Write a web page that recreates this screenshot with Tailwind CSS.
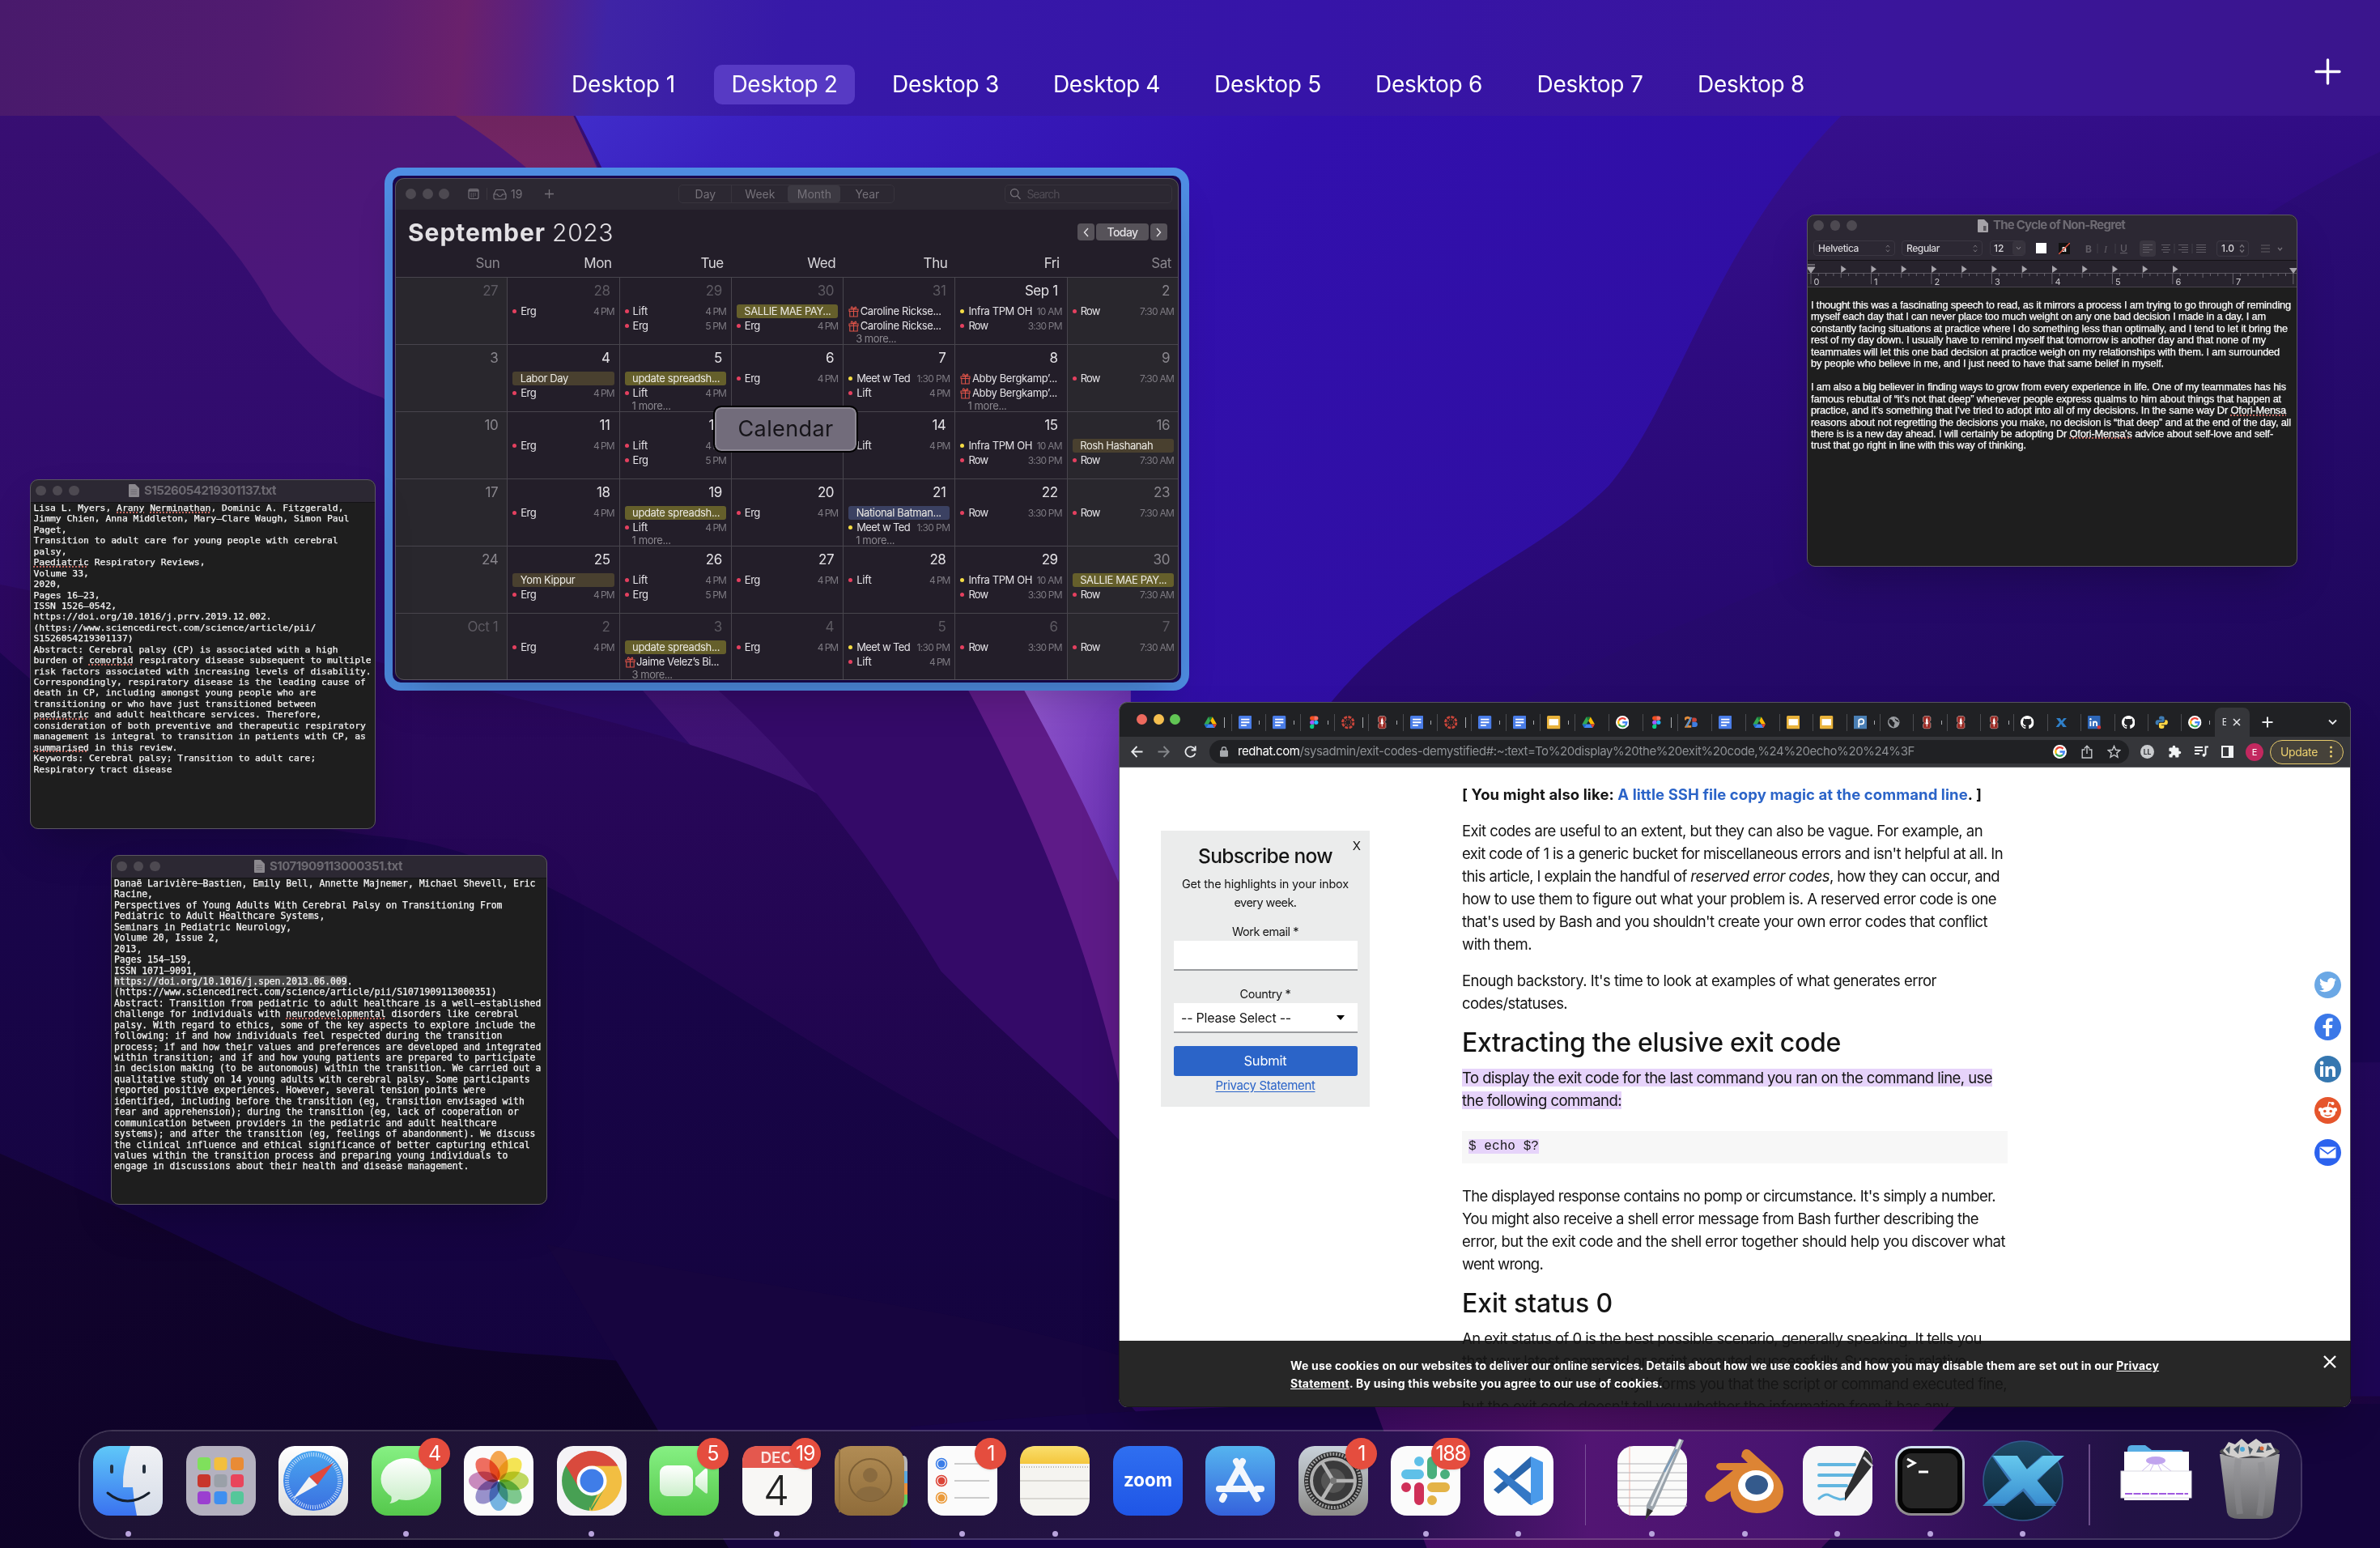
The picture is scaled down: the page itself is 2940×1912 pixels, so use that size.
<!DOCTYPE html>
<html lang="en">
<head>
<meta charset="utf-8">
<title>Mission Control</title>
<script src="https://cdn.jsdelivr.net/npm/@tailwindcss/browser@4"></script>
</head>
<body class="relative w-[2940px] h-[1912px] overflow-hidden bg-[#1d0758] font-['Inter',sans-serif] text-white">

<!-- Wallpaper -->
<svg class="absolute inset-0 w-full h-full" viewBox="0 0 1568 1020" preserveAspectRatio="none">
  <defs>
    <linearGradient id="wBase" x1="0" y1="0" x2="0.15" y2="1"><stop offset="0" stop-color="#3a0f74"/><stop offset=".35" stop-color="#2f0b6c"/><stop offset="1" stop-color="#1d0653"/></linearGradient>
    <linearGradient id="wPurple" x1="0" y1="0" x2=".8" y2="1"><stop offset="0" stop-color="#4b176f"/><stop offset=".35" stop-color="#4c177c"/><stop offset="1" stop-color="#38106f"/></linearGradient>
    <linearGradient id="wMag" x1="0" y1="0" x2="0" y2="1"><stop offset="0" stop-color="#64204f"/><stop offset="1" stop-color="#78276c"/></linearGradient>
    <linearGradient id="wBlue" x1="0" y1=".1" x2="1" y2=".6"><stop offset="0" stop-color="#4334cf"/><stop offset=".12" stop-color="#3a20c0"/><stop offset=".35" stop-color="#3210ae"/><stop offset=".7" stop-color="#2f0ea0"/><stop offset="1" stop-color="#2c0a80"/></linearGradient>
    <linearGradient id="wRight" x1="0" y1="0" x2=".3" y2="1"><stop offset="0" stop-color="#3d1498"/><stop offset=".4" stop-color="#2e0b80"/><stop offset="1" stop-color="#1e065c"/></linearGradient>
    <linearGradient id="wRight2" x1="0" y1="0" x2=".4" y2="1"><stop offset="0" stop-color="#340f8a"/><stop offset="1" stop-color="#1a0552"/></linearGradient>
    <linearGradient id="wStreak" x1="0" y1="0" x2="1" y2=".5"><stop offset="0" stop-color="#9158cc"/><stop offset="1" stop-color="#6a30b4"/></linearGradient>
    <linearGradient id="wLow" x1="0" y1="0" x2="0" y2="1"><stop offset="0" stop-color="#2c0860"/><stop offset="1" stop-color="#14033c"/></linearGradient>
    <linearGradient id="wLow2" x1="0" y1="0" x2="0" y2="1"><stop offset="0" stop-color="#1c0650"/><stop offset="1" stop-color="#12033a"/></linearGradient>
    <linearGradient id="wDark" x1="0" y1="0" x2="1" y2="1"><stop offset="0" stop-color="#12032f"/><stop offset="1" stop-color="#0a0220"/></linearGradient>
    <linearGradient id="wFoot" x1="0" y1="0" x2="1" y2="0"><stop offset="0" stop-color="#2a0660"/><stop offset=".35" stop-color="#4d0f66"/><stop offset=".7" stop-color="#3c0a58"/><stop offset="1" stop-color="#1a0440"/></linearGradient>
  </defs>
  <rect width="1568" height="1020" fill="url(#wBase)"/>
  <path d="M330 0H1568V620H760C680 470 560 420 480 300C430 220 420 120 330 0Z" fill="url(#wBlue)"/>
  <path d="M0 0H340C360 40 370 56 378 77C386 95 392 105 398 120C440 260 620 440 740 620L520 560C400 440 330 330 252 262C215 250 196 225 180 205C150 150 110 120 66 77L0 20Z" fill="url(#wPurple)"/>
  <path d="M220 0H340C360 40 370 56 378 77C386 95 392 105 400 130L380 140C350 112 330 96 301 77C270 50 240 20 220 0Z" fill="url(#wMag)"/>
  <path d="M1568 40L1230 60C1130 150 1110 260 1060 320C1000 380 900 400 840 520L900 640H1568Z" fill="url(#wRight)"/>
  <path d="M1568 100C1400 180 1280 330 1180 380C1100 420 1010 440 960 500V700H1568Z" fill="url(#wRight2)"/>
  <path d="M0 385C120 410 200 420 280 445C420 480 520 500 600 560C700 620 740 660 800 700V1020H0Z" fill="url(#wLow)"/>
  <path d="M248 340C380 370 500 440 620 640C680 700 720 730 745 760V455H640L520 400Z" fill="#340a68"/>
  <path d="M638 455H680L745 585V760C735 680 700 570 638 455Z" fill="#5e1b88"/>
  <path d="M672 450H745V600C720 540 700 500 672 450Z" fill="url(#wStreak)"/>
  <path d="M0 430C100 520 180 545 260 552C400 570 540 720 760 800V1020H0Z" fill="url(#wLow2)"/>
  <path d="M0 760C90 800 150 830 230 870C320 905 400 880 520 920L620 1020H0Z" fill="url(#wDark)"/>
  <path d="M360 820C500 850 640 860 760 900V1020H480Z" fill="#17053f"/>
  <path d="M740 920H1568V1020H820Z" fill="url(#wFoot)"/>
  <path d="M1290 925H1568V1020H1200Z" fill="#14043c"/>
  <path d="M600 940C720 930 840 925 905 925L940 1020H600Z" fill="#170446"/>
</svg>

<!-- Spaces bar -->
<header class="absolute inset-x-0 top-0 h-[143px] flex items-start pt-[80px] overflow-hidden bg-[linear-gradient(97deg,#491a6c_0%,#511b70_11%,#5c1e70_16%,#6a216c_19.5%,#5a2080_22%,#3f24a6_25.500%,#3719a8_33%,#3614a8_55%,#3a159c_78%,#3a158c_100%)]">
  <nav class="relative flex gap-[25px] ml-[683px] text-[28px] leading-[49px]">
    <div class="w-[174px] text-center"><span data-w="128">Desktop 1</span></div>
    <div class="w-[174px] text-center rounded-[10px] bg-[#573ac4]"><span data-w="131">Desktop 2</span></div>
    <div class="w-[174px] text-center"><span data-w="132">Desktop 3</span></div>
    <div class="w-[174px] text-center"><span data-w="132">Desktop 4</span></div>
    <div class="w-[174px] text-center"><span data-w="132">Desktop 5</span></div>
    <div class="w-[174px] text-center"><span data-w="132">Desktop 6</span></div>
    <div class="w-[174px] text-center"><span data-w="131">Desktop 7</span></div>
    <div class="w-[174px] text-center"><span data-w="132">Desktop 8</span></div>
  </nav>
  <svg class="absolute left-[2859px] top-[72px] w-[33px] h-[33px]" viewBox="0 0 33 33" stroke="#fff" stroke-width="3.4" stroke-linecap="round"><path d="M16.5 2V31M2 16.5H31"/></svg>
</header>

<!-- Calendar window -->
<div class="absolute left-[475px] top-[207px] w-[994px] h-[646px] rounded-[20px] border-[10px] border-[#4f8ee4] bg-[#1b0750]"></div>
<section class="absolute left-[488px] top-[220px] w-[968px] h-[620px] rounded-[11px] overflow-hidden bg-[#231e29] outline -outline-offset-1 outline-[#57535c] shadow-2xl flex flex-col">
  <div class="h-[39px] shrink-0 bg-[#2c2832] flex items-center text-[14px] text-[#757179]">
    <div class="flex gap-[7.5px] ml-[13px] w-[84px]">
      <i class="size-[13px] rounded-full bg-[#4d4951]"></i><i class="size-[13px] rounded-full bg-[#4d4951]"></i><i class="size-[13px] rounded-full bg-[#4d4951]"></i>
    </div>
    <svg class="w-[14px] h-[15px] -ml-[7px]" viewBox="0 0 14 15" fill="none" stroke="#757179" stroke-width="1.2"><rect x="1" y="1.5" width="12" height="12" rx="2"/><path d="M1 3.6H13" stroke-width="2"/><path d="M3.5 7H10.5M3.5 9H10.5M3.5 11H8" stroke-dasharray="1.3 1.2"/></svg>
    <i class="w-px h-[15px] bg-[#3b3740] ml-[9px]"></i>
    <svg class="w-[17px] h-[14px] ml-[7px]" viewBox="0 0 17 14" fill="none" stroke="#757179" stroke-width="1.2"><path d="M1 7L4 1.500H13L16 7V11Q16 13 14 13H3Q1 13 1 11ZM1 7H5.500Q6 9.500 8.500 9.500T11.500 7H16"/></svg>
    <span class="ml-[5px]">19</span>
    <svg class="w-[13px] h-[13px] ml-[27px]" viewBox="0 0 13 13" stroke="#757179" stroke-width="1.300"><path d="M6.500 1V12M1 6.500H12"/></svg>
    <div class="ml-[153px] flex h-[23px] w-[267px] rounded-[5px] border border-[#38343d] leading-[21px] text-center">
      <span class="w-[65px] border-r border-[#38343d]">Day</span><span class="w-[69px]">Week</span><span class="w-[65px] bg-[#3c3942] rounded">Month</span><span class="w-[66px]">Year</span>
    </div>
    <div class="ml-[136px] flex items-center h-[23px] w-[207px] rounded-[5px] border border-[#38343d] text-[#504c55] pl-[5px] gap-[6px]">
      <svg class="size-[15px]" viewBox="0 0 15 15" fill="none" stroke="#757179" stroke-width="1.300"><circle cx="6.200" cy="6.200" r="4.700"/><path d="M9.600 9.800L13.500 14"/></svg><span data-w="40">Search</span>
    </div>
  </div>
  <div class="h-[56px] shrink-0 flex items-center pl-[16px] pr-[14px] text-[#e3e1e5]">
    <h1 class="text-[30px] font-bold"><span data-w="170">September</span> <span class="font-light ml-[1px]" data-w="76">2023</span></h1>
    <div class="ml-auto flex gap-[2px] text-[14px] h-[21px] leading-[21px] font-medium text-center -mt-[1px]">
      <span class="w-[21px] bg-[#565259] rounded-[4px] flex items-center justify-center"><svg class="w-[7px] h-[12px]" viewBox="0 0 7 12" fill="none" stroke="#e3e1e5" stroke-width="1.400"><path d="M6 1L1.500 6L6 11"/></svg></span>
      <span class="w-[65px] bg-[#565259] rounded-[4px]"><span data-w="38">Today</span></span>
      <span class="w-[21px] bg-[#565259] rounded-[4px] flex items-center justify-center"><svg class="w-[7px] h-[12px]" viewBox="0 0 7 12" fill="none" stroke="#e3e1e5" stroke-width="1.400"><path d="M1 1L5.500 6L1 11"/></svg></span>
    </div>
  </div>
  <div class="h-[27px] shrink-0 grid grid-cols-7 text-right text-[17px] leading-[21px] text-[#d8d6da] tracking-tight *:pr-[9px]">
    <span class="text-[#89868d]">Sun</span><span>Mon</span><span>Tue</span><span>Wed</span><span>Thu</span><span>Fri</span><span class="text-[#89868d]">Sat</span>
  </div>
  <div id="month" class="grow grid grid-cols-7 auto-rows-[83px]"></div>
</section>
<div class="absolute left-[883px] top-[503px] w-[175px] h-[54px] rounded-[8px] border-2 border-[#8d8894] outline-[2px] outline-black bg-[#726c7b] text-[#161419] text-[27px] leading-[50px] text-center"><span data-w="118">Calendar</span></div>

<!-- Text file 1 -->
<section class="absolute left-[37px] top-[592px] w-[427px] h-[432px] rounded-[10px] overflow-hidden bg-[#1e1e1e] outline -outline-offset-1 outline-[#5b5761] shadow-2xl">
  <div class="h-[29px] bg-[#2c2833] border-b border-[#141216] flex items-center">
    <div class="flex gap-[8px] ml-[7px] w-[115px]"><i class="size-[12.500px] rounded-full bg-[#4d4951]"></i><i class="size-[12.500px] rounded-full bg-[#4d4951]"></i><i class="size-[12.500px] rounded-full bg-[#4d4951]"></i></div>
    <svg class="w-[13px] h-[16px]" viewBox="0 0 13 16"><path d="M0 1Q0 0 1 0H8L13 5V15Q13 16 12 16H1Q0 16 0 15Z" fill="#8b888e"/><path d="M2.500 7H10M2.500 9.500H10M2.500 12H10" stroke="#6e6b72"/></svg>
    <span class="ml-[6px] text-[15px] font-bold text-[#6d6a72]" data-w="163">S1526054219301137.txt</span>
  </div>
  <pre class="pl-[4.500px] font-['DejaVu_Sans_Mono',monospace] text-[11.360px] leading-[13.440px] text-[#f4f4f4] [-webkit-text-stroke:0.25px_#f4f4f4]">Lisa L. Myers, <u class="underline decoration-dotted decoration-2 decoration-[#c4665f] underline-offset-[1px]">Arany</u> <u class="underline decoration-dotted decoration-2 decoration-[#c4665f] underline-offset-[1px]">Nerminathan</u>, Dominic A. Fitzgerald,
Jimmy Chien, Anna Middleton, Mary–Clare Waugh, Simon Paul
Paget,
Transition to adult care for young people with cerebral
palsy,
<u class="underline decoration-dotted decoration-2 decoration-[#c4665f] underline-offset-[1px]">Paediatric</u> Respiratory Reviews,
Volume 33,
2020,
Pages 16–23,
ISSN 1526–0542,
https://doi.org/10.1016/j.prrv.2019.12.002.
(https://www.sciencedirect.com/science/article/pii/
S1526054219301137)
Abstract: Cerebral palsy (CP) is associated with a high
burden of <u class="underline decoration-dotted decoration-2 decoration-[#c4665f] underline-offset-[1px]">comorbid</u> respiratory disease subsequent to multiple
risk factors associated with increasing levels of disability.
Correspondingly, respiratory disease is the leading cause of
death in CP, including amongst young people who are
transitioning or who have just transitioned between
<u class="underline decoration-dotted decoration-2 decoration-[#c4665f] underline-offset-[1px]">paediatric</u> and adult healthcare services. Therefore,
consideration of both preventive and therapeutic respiratory
management is integral to transition in patients with CP, as
<u class="underline decoration-dotted decoration-2 decoration-[#c4665f] underline-offset-[1px]">summarised</u> in this review.
Keywords: Cerebral palsy; Transition to adult care;
Respiratory tract disease</pre>
</section>

<!-- Text file 2 -->
<section class="absolute left-[137px] top-[1056px] w-[539px] h-[432px] rounded-[10px] overflow-hidden bg-[#1e1e1e] outline -outline-offset-1 outline-[#5b5761] shadow-2xl">
  <div class="h-[29px] bg-[#2c2833] border-b border-[#141216] flex items-center">
    <div class="flex gap-[8px] ml-[7px] w-[170px]"><i class="size-[12.500px] rounded-full bg-[#4d4951]"></i><i class="size-[12.500px] rounded-full bg-[#4d4951]"></i><i class="size-[12.500px] rounded-full bg-[#4d4951]"></i></div>
    <svg class="w-[13px] h-[16px]" viewBox="0 0 13 16"><path d="M0 1Q0 0 1 0H8L13 5V15Q13 16 12 16H1Q0 16 0 15Z" fill="#8b888e"/><path d="M2.500 7H10M2.500 9.500H10M2.500 12H10" stroke="#6e6b72"/></svg>
    <span class="ml-[6px] text-[15px] font-bold text-[#6d6a72]" data-w="164">S1071909113000351.txt</span>
  </div>
  <pre class="pl-[4px] font-['DejaVu_Sans_Mono',monospace] text-[11.380px] leading-[13.440px] text-[#f4f4f4] [-webkit-text-stroke:0.25px_#f4f4f4]">Danaë Larivière–Bastien, Emily Bell, Annette Majnemer, Michael Shevell, Eric
Racine,
Perspectives of Young Adults With Cerebral Palsy on Transitioning From
Pediatric to Adult Healthcare Systems,
Seminars in Pediatric Neurology,
Volume 20, Issue 2,
2013,
Pages 154–159,
ISSN 1071–9091,
<span class="bg-[#464646]">https://doi.org/10.1016/j.spen.2013.06.009</span>.
(https://www.sciencedirect.com/science/article/pii/S1071909113000351)
Abstract: Transition from pediatric to adult healthcare is a well–established
challenge for individuals with <u class="underline decoration-dotted decoration-2 decoration-[#c4665f] underline-offset-[1px]">neurodevelopmental</u> disorders like cerebral
palsy. With regard to ethics, some of the key aspects to explore include the
following: if and how individuals feel respected during the transition
process; if and how their values and preferences are developed and integrated
within transition; and if and how young patients are prepared to participate
in decision making (to be autonomous) within the transition. We carried out a
qualitative study on 14 young adults with cerebral palsy. Some participants
reported positive experiences. However, several tension points were
identified, including before the transition (eg, transition envisaged with
fear and apprehension); during the transition (eg, lack of cooperation or
communication between providers in the pediatric and adult healthcare
systems); and after the transition (eg, feelings of abandonment). We discuss
the clinical influence and ethical significance of better capturing ethical
values within the transition process and preparing young individuals to
engage in discussions about their health and disease management.</pre>
</section>

<!-- Rich text document -->
<section class="absolute left-[2232px] top-[265px] w-[606px] h-[435px] rounded-[10px] overflow-hidden bg-[#1e1e1e] outline -outline-offset-1 outline-[#5b5761] shadow-2xl flex flex-col">
  <div class="h-[27px] shrink-0 bg-[#2c2833] flex items-center">
    <div class="flex gap-[8px] ml-[8px] w-[203px]"><i class="size-[12.500px] rounded-full bg-[#4d4951]"></i><i class="size-[12.500px] rounded-full bg-[#4d4951]"></i><i class="size-[12.500px] rounded-full bg-[#4d4951]"></i></div>
    <svg class="w-[13px] h-[16px]" viewBox="0 0 13 16"><path d="M0 1Q0 0 1 0H8L13 5V15Q13 16 12 16H1Q0 16 0 15Z" fill="#a5a2a8"/><path d="M7 8H10.500V14H7ZM2.500 7H5" fill="#57545b"/></svg>
    <span class="ml-[6px] text-[15px] font-bold text-[#6d6a72]" data-w="163">The Cycle of Non-Regret</span>
  </div>
  <div class="h-[30px] shrink-0 bg-[#2c2833] border-b border-[#141216] flex items-center pl-[8px] text-[12px] text-[#d9d7db] font-medium">
    <div class="w-[101px] h-[19px] rounded-[4px] border border-[#3b3742] px-[5px] flex items-center justify-between"><span data-w="50">Helvetica</span><svg class="w-[6px] h-[10px]" viewBox="0 0 6 10" fill="none" stroke="#77737b"><path d="M1 3.500L3 1L5 3.500M1 6.500L3 9L5 6.500"/></svg></div>
    <div class="ml-[8px] w-[100px] h-[19px] rounded-[4px] border border-[#3b3742] px-[5px] flex items-center justify-between"><span data-w="41">Regular</span><svg class="w-[6px] h-[10px]" viewBox="0 0 6 10" fill="none" stroke="#77737b"><path d="M1 3.500L3 1L5 3.500M1 6.500L3 9L5 6.500"/></svg></div>
    <div class="ml-[9px] w-[44px] h-[19px] rounded-[4px] border border-[#3b3742] pl-[4px] flex items-center justify-between"><span>12</span><span class="bg-[#37333d] rounded-[3px] h-full w-[15px] flex items-center justify-center"><svg class="w-[7px] h-[5px]" viewBox="0 0 7 5" fill="none" stroke="#8a868e"><path d="M1 1L3.500 4L6 1"/></svg></span></div>
    <i class="ml-[13px] size-[13px] bg-white"></i>
    <svg class="ml-[15px] size-[14px]" viewBox="0 0 14 14"><rect width="14" height="14" fill="#111"/><text x="3.500" y="11" font-size="11" font-weight="700" fill="#fff" font-family="Inter">a</text><path d="M0 14L14 0" stroke="#e0553f" stroke-width="1.500"/></svg>
    <svg class="ml-[13px] w-[230px] h-[20px]" viewBox="0 0 230 20" fill="none" stroke="#605c65" stroke-width="1.200">
      <text x="6" y="14.500" font-size="12" font-weight="700" fill="#605c65" stroke="none" font-family="Inter">B</text>
      <text x="29" y="14.500" font-size="12" font-style="italic" fill="#605c65" stroke="none" font-family="Liberation Serif">I</text>
      <text x="49" y="14" font-size="12" fill="#605c65" stroke="none" font-family="Inter" text-decoration="underline">U</text>
      <path d="M21 4V16M43 4V16M116 4V16M138 4V16" stroke="#3f3b45"/>
      <rect x="73" y="0" width="20" height="20" rx="4" fill="#3a3640" stroke="none"/>
      <path d="M77 5.500H89M77 8.500H85M77 11.500H89M77 14.500H85M100 5.500H111M102 8.500H109M100 11.500H111M102 14.500H109M121 5.500H133M125 8.500H133M121 11.500H133M125 14.500H133M143 5.500H155M143 8.500H155M143 11.500H155M143 14.500H155"/>
      <rect x="168.500" y=".6" width="39" height="18.800" rx="4" stroke="#3b3742"/>
      <text x="174" y="14.300" font-size="12" font-weight="500" fill="#d9d7db" stroke="none" font-family="Inter">1.0</text>
      <path d="M197 8.500L199.500 5.500L202 8.500M197 11.500L199.500 14.500L202 11.500" stroke="#77737b"/>
      <path d="M223 6H230M223 10H230M223 14H230"/>
    </svg>
    <svg class="w-[32px] h-[20px]" viewBox="0 0 32 20" fill="none" stroke="#605c65" stroke-width="1.200"><path d="M0 6H4M0 10H4M0 14H4"/><path d="M14 9L16.500 12L19 9" stroke="#77737b"/></svg>
  </div>
  <svg class="w-[606px] h-[33px] shrink-0 bg-[#27232d]" viewBox="0 0 606 33"><g id="ruler"></g></svg>
  <div class="pt-[15px] pl-[5px] font-['Liberation_Sans',sans-serif] text-[12.800px] leading-[14.460px] text-[#fafafa] [-webkit-text-stroke:0.25px_#fafafa] *:block">
    <div><span data-w="593">I thought this was a fascinating speech to read, as it mirrors a process I am trying to go through of reminding</span></div>
    <div><span data-w="562">myself each day that I can never place too much weight on any one bad decision I made in a day. I am</span></div>
    <div><span data-w="589">constantly facing situations at practice where I do something less than optimally, and I tend to let it bring the</span></div>
    <div><span data-w="562">rest of my day down. I usually have to remind myself that tomorrow is another day and that none of my</span></div>
    <div><span data-w="579">teammates will let this one bad decision at practice weigh on my relationships with them. I am surrounded</span></div>
    <div><span data-w="436">by people who believe in me, and I just need to have that same belief in myself.</span></div>
    <div>&nbsp;</div>
    <div><span data-w="587">I am also a big believer in finding ways to grow from every experience in life. One of my teammates has his</span></div>
    <div><span data-w="581">famous rebuttal of “it’s not that deep” whenever people express qualms to him about things that happen at</span></div>
    <div><span data-w="587">practice, and it’s something that I’ve tried to adopt into all of my decisions. In the same way Dr <u class="underline decoration-dotted decoration-2 decoration-[#c4665f] underline-offset-[1px]">Ofori-Mensa</u></span></div>
    <div><span data-w="593">reasons about not regretting the decisions you make, no decision is “that deep” and at the end of the day, all</span></div>
    <div><span data-w="571">there is is a new day ahead. I will certainly be adopting Dr <u class="underline decoration-dotted decoration-2 decoration-[#c4665f] underline-offset-[1px]">Ofori-Mensa’s</u> advice about self-love and self-</span></div>
    <div><span data-w="266">trust that go right in line with this way of thinking.</span></div>
  </div>
</section>

<!-- Favicon symbols -->
<svg class="hidden">
  <symbol id="drive" viewBox="0 0 16 16"><path d="M5.500 1.500H10.500L8 6Z" fill="#188038"/><path d="M5.500 1.500L8 6L3 14.500L.5 10.300Z" fill="#34a853"/><path d="M10.500 1.500L15.500 10.300H10.500L8 6Z" fill="#fbbc04"/><path d="M.5 10.300H5.400L3 14.500Z" fill="#1967d2"/><path d="M5.400 10.300H10.600L13 14.500H3Z" fill="#4285f4"/><path d="M10.600 10.300H15.500L13 14.500Z" fill="#ea4335"/></symbol>
  <symbol id="docs" viewBox="0 0 16 16"><rect width="16" height="16" rx="1.500" fill="#4a7de8"/><path d="M3 4.500H13M3 8H13M3 11.500H9.500" stroke="#fff" stroke-width="1.800"/></symbol>
  <symbol id="slides" viewBox="0 0 16 16"><rect width="16" height="16" rx="1.500" fill="#e8b23a"/><rect x="2.500" y="4" width="11" height="7.500" fill="#fff"/></symbol>
  <symbol id="figma" viewBox="0 0 16 16"><path d="M8 .5H5.500a2.500 2.500 0 0 0 0 5H8Z" fill="#f24e1e"/><path d="M8 .5h2.500a2.500 2.500 0 0 1 0 5H8Z" fill="#ff7262"/><path d="M8 5.500H5.500a2.500 2.500 0 0 0 0 5H8Z" fill="#a259ff"/><circle cx="10.500" cy="8" r="2.500" fill="#1abcfe"/><path d="M8 10.500H5.500a2.500 2.500 0 1 0 2.500 2.500Z" fill="#0acf83"/></symbol>
  <symbol id="canvas" viewBox="0 0 16 16"><circle cx="8" cy="8" r="6.500" fill="none" stroke="#c9453a" stroke-width="2.800" stroke-dasharray="3.700 1.400"/><circle cx="8" cy="8" r="3.400" fill="none" stroke="#c9453a" stroke-width="1.200" stroke-dasharray="1.200 1.470"/></symbol>
  <symbol id="stan" viewBox="0 0 16 16"><path d="M5 .5H11L12.500 2V5.500L11 7.500L12.500 9V14L11 15.500H5L3.500 14V10.500L5 8.500L3.500 7V2Z" fill="#9c2a24" stroke="#e8dcd8" stroke-width=".5"/><path d="M8 2L9.500 6L9 6.500L10 10H8.500V13H7.500V10H6L7 6.500L6.500 6Z" fill="#fff"/></symbol>
  <symbol id="goog" viewBox="0 0 16 16"><circle cx="8" cy="8" r="8" fill="#fff"/><g fill="none" stroke-width="2.200"><path d="M11.800 4.600A5 5 0 0 0 3.600 5.700" stroke="#ea4335"/><path d="M3.600 5.700A5 5 0 0 0 3.600 10.300" stroke="#fbbc05"/><path d="M3.600 10.300A5 5 0 0 0 11.300 11.700" stroke="#34a853"/><path d="M11.300 11.700A5 5 0 0 0 13 8H8" stroke="#4285f4"/></g></symbol>
  <symbol id="twob" viewBox="0 0 16 16"><path d="M0 5Q2 1 5 2.500Q8 4 5 8L2 13H8" fill="none" stroke="#e08a3a" stroke-width="2.800"/><path d="M8 2L2 13" stroke="#4a90d9" stroke-width="2"/><path d="M9 2.500H12a2.500 2.500 0 0 1 0 5H9Z" fill="#c8453a"/><path d="M9 7.500H12.500a3 3 0 0 1 0 6H9Z" fill="#3f7de0"/></symbol>
  <symbol id="pan" viewBox="0 0 16 16"><rect width="16" height="16" fill="#4a7fb5"/><path d="M6 14V4.500M6 7a3 3 0 1 1 3 3H6" fill="none" stroke="#fff" stroke-width="1.600"/></symbol>
  <symbol id="globe" viewBox="0 0 16 16"><circle cx="8" cy="8" r="7" fill="#9a9da1"/><path d="M3 4Q7 4 7 7Q10 8 9 10Q8 12 8 14Q4 12 2 8ZM9 2Q10 5 13 5L14.500 8Q12 7 10 5.500Z" fill="#202124"/></symbol>
  <symbol id="gh" viewBox="0 0 16 16"><path fill="#fff" d="M8 0C3.580 0 0 3.580 0 8c0 3.540 2.290 6.530 5.470 7.590.4.070.55-.17.55-.38 0-.19-.01-.82-.01-1.490-2.010.37-2.530-.49-2.690-.94-.09-.23-.48-.94-.82-1.130-.28-.15-.68-.52-.01-.53.63-.01 1.080.58 1.230.82.72 1.210 1.870.87 2.330.66.07-.52.28-.87.51-1.070-1.780-.2-3.640-.89-3.640-3.950 0-.87.31-1.590.82-2.150-.08-.2-.36-1.020.08-2.120 0 0 .67-.21 2.200.82.64-.18 1.320-.27 2-.27s1.360.09 2 .27c1.530-1.040 2.200-.82 2.200-.82.44 1.100.16 1.920.08 2.120.51.56.82 1.270.82 2.150 0 3.070-1.870 3.750-3.650 3.950.29.25.54.73.54 1.480 0 1.070-.01 1.930-.01 2.200 0 .21.15.46.55.38A8.010 8.010 0 0 0 16 8c0-4.420-3.580-8-8-8z"/></symbol>
  <symbol id="xx" viewBox="0 0 16 16"><path d="M2 3H6.500L8.500 6L11 3H14.500L10 8L14.500 13.500H10L7.800 10L5 13.500H1.500L6 8Z" fill="#2f7fc8"/></symbol>
  <symbol id="li" viewBox="0 0 16 16"><rect width="15" height="16" rx="1" fill="#2d66b8"/><path d="M3.300 6.500V12.500M6.700 12.500V6.500M6.700 9.500Q6.700 7.300 8.800 7.300T10.800 9.500V12.500" fill="none" stroke="#fff" stroke-width="1.800"/><circle cx="3.300" cy="4" r="1.200" fill="#fff"/><circle cx="13.500" cy="14" r="2.300" fill="#d93636"/></symbol>
  <symbol id="py" viewBox="0 0 16 16"><path d="M8 .5C5 .5 5 1.800 5 2.800V4.300H8.200V5H3.200C1.500 5 .6 6.300 .6 8.300S1.500 11 3 11H4.200V9.500C4.200 8 5.200 7.500 6.500 7.500H9.500C10.700 7.500 11.200 6.700 11.200 5.800V2.800C11.200 1.300 10.200 .5 8 .5Z" fill="#3f7cb4"/><path d="M8 15.500C11 15.500 11 14.200 11 13.200V11.700H7.800V11H12.800C14.500 11 15.400 9.700 15.400 7.700S14.500 5 13 5H12V6.500C12 8 11 8.500 9.700 8.500H6.500C5.300 8.500 4.800 9.300 4.800 10.200V13.200C4.800 14.700 5.800 15.500 8 15.500Z" fill="#ffd645"/></symbol>
</svg>

<!-- Browser window -->
<section class="absolute left-[1382px] top-[867px] w-[1522px] h-[871px] rounded-[11px] overflow-hidden bg-white outline -outline-offset-1 outline-[#55525c] shadow-2xl flex flex-col">
  <div class="h-[43px] shrink-0 bg-[#202124] flex">
    <div class="flex gap-[7.500px] items-center w-[96.600px] pl-[22px]"><i class="size-[13px] rounded-full bg-[#ed6a5e] shrink-0"></i><i class="size-[13px] rounded-full bg-[#f5bf4f] shrink-0"></i><i class="size-[13px] rounded-full bg-[#61c554] shrink-0"></i></div>
    <div id="tabs" class="flex h-[21px] mt-[15px]"></div>
    <div class="w-[43px] h-[36px] mt-[7px] bg-[#35363a] rounded-t-[8px] flex items-center gap-[8px] pl-[9px] text-[12px] text-[#dfe1e5]"><span class="w-[5px] overflow-hidden">E</span><svg class="size-[10px]" viewBox="0 0 10 10" stroke="#e8eaed" stroke-width="1.500"><path d="M1 1L9 9M9 1L1 9"/></svg></div>
    <svg class="size-[14px] ml-[15px] mt-[18px]" viewBox="0 0 14 14" stroke="#e8eaed" stroke-width="2"><path d="M7 .5V13.500M.5 7H13.500"/></svg>
    <svg class="w-[11px] h-[8px] ml-[68px] mt-[21px]" viewBox="0 0 11 8" fill="none" stroke="#e8eaed" stroke-width="1.800"><path d="M1 1.500L5.500 6L10 1.500"/></svg>
  </div>
  <div class="h-[38px] shrink-0 bg-[#35363a] border-b border-[#5a5b5f] flex items-center">
    <svg class="size-[15px] ml-[15px]" viewBox="0 0 15 15" fill="none" stroke="#e8eaed" stroke-width="1.800"><path d="M14.500 7.500H1.500M7.500 1L1.200 7.500L7.500 14"/></svg>
    <svg class="size-[15px] ml-[18px]" viewBox="0 0 15 15" fill="none" stroke="#85878b" stroke-width="1.800"><path d="M.5 7.500H13.500M7.500 1L13.800 7.500L7.500 14"/></svg>
    <svg class="size-[15px] ml-[18px]" viewBox="0 0 15 15" fill="none" stroke="#e8eaed" stroke-width="1.800"><path d="M13 4.500A6.200 6.200 0 1 0 13.500 9.500M13.700 .5V5.500H8.700"/></svg>
    <div class="ml-[16px] w-[1136px] h-[29px] rounded-full bg-[#202124] flex items-center pl-[13px] text-[15px] text-[#8e9195]">
      <svg class="w-[10px] h-[13px]" viewBox="0 0 10 13"><rect y="4.800" width="10" height="8" rx="1.200" fill="#a6a9ad"/><path d="M2.400 5V3.300a2.600 2.600 0 0 1 5.200 0V5" fill="none" stroke="#a6a9ad" stroke-width="1.400"/></svg>
      <span class="ml-[12px] w-[1007px]"><span data-w="836"><span class="text-white">redhat.com</span>/sysadmin/exit-codes-demystified#:~:text=To%20display%20the%20exit%20code,%24%20echo%20%24%3F</span></span>
      <svg class="size-[17px] shrink-0"><use href="#goog"/></svg>
      <svg class="w-[14px] h-[17px] ml-[18px] shrink-0" viewBox="0 0 14 17" fill="none" stroke="#c4c7ca" stroke-width="1.400"><path d="M4.500 6H1.200V16H12.800V6H9.500M7 11V1.500M3.800 4.500L7 1.200L10.200 4.500"/></svg>
      <svg class="size-[17px] ml-[18px] shrink-0" viewBox="0 0 17 17" fill="none" stroke="#c4c7ca" stroke-width="1.400"><path d="M8.500 1.500L10.500 6.300L15.700 6.700L11.800 10.100L13 15.200L8.500 12.500L4 15.200L5.200 10.100L1.300 6.700L6.500 6.300Z"/></svg>
    </div>
    <svg class="size-[17px] ml-[14px]" viewBox="0 0 17 17"><circle cx="8.500" cy="8.500" r="8.500" fill="#c9cbce"/><text x="8.500" y="11.800" font-size="8.500" font-weight="700" text-anchor="middle" fill="#35363a" font-family="Inter">LL</text></svg>
    <svg class="size-[17px] ml-[17px]" viewBox="0 0 24 24" fill="#f1f3f4"><path d="M20.500 11H19V7c0-1.100-.9-2-2-2h-4V3.500a2.500 2.500 0 0 0-5 0V5H4c-1.100 0-2 .9-2 2v3.800h1.500a2.700 2.700 0 0 1 0 5.400H2V20c0 1.100.9 2 2 2h3.800v-1.500a2.700 2.700 0 0 1 5.400 0V22H17c1.100 0 2-.9 2-2v-4h1.500a2.500 2.500 0 0 0 0-5z"/></svg>
    <svg class="size-[17px] ml-[16px]" viewBox="0 0 17 17" fill="none" stroke="#f1f3f4" stroke-width="1.900"><path d="M0 3H10M0 7H10M0 11H6M17 2.500H13.500V12.500"/><circle cx="11.500" cy="12.800" r="2" fill="#f1f3f4" stroke="none"/></svg>
    <svg class="w-[15px] h-[15px] ml-[16px]" viewBox="0 0 15 15"><path d="M1 1H14V14H1Z" fill="none" stroke="#f1f3f4" stroke-width="2"/><path d="M9 1H14V14H9Z" fill="#f1f3f4"/></svg>
    <span class="size-[22px] ml-[15px] rounded-full bg-[#c2285f] text-[11px] leading-[22px] text-center">E</span>
    <span class="ml-[8px] w-[91px] h-[30px] rounded-full border-[1.500px] border-[#e8cb6a] bg-[#46423a] text-[#ecd06f] text-[14px] leading-[27px] pl-[12px] flex items-center gap-[15px]"><span data-w="46">Update</span><svg class="w-[3px] h-[15px]" viewBox="0 0 3 15" fill="#ecd06f"><circle cx="1.500" cy="2" r="1.500"/><circle cx="1.500" cy="7.500" r="1.500"/><circle cx="1.500" cy="13" r="1.500"/></svg></span>
  </div>
  <div class="relative grow text-[#151515] overflow-hidden">
    <div class="flex items-start">
      <!-- Newsletter form -->
      <aside class="relative ml-[52px] mt-[78px] w-[258px] h-[341px] shrink-0 bg-[#ebecec] px-[15.500px] pt-[16px] flex flex-col items-stretch text-center">
        <span class="absolute right-[11px] top-[9px] text-[15px] leading-[20px]">X</span>
        <h3 class="text-[24.500px] leading-[30px] font-medium"><span data-w="166">Subscribe now</span></h3>
        <p class="mt-[8px] text-[14.500px] leading-[23px]"><span data-w="206">Get the highlights in your inbox</span><br><span data-w="77">every week.</span></p>
        <label class="mt-[14px] text-[14.500px] leading-[22px]"><span data-w="82">Work email *</span></label>
        <div class="h-[37px] bg-white border-b-2 border-[#9a9c9f]"></div>
        <label class="mt-[18px] text-[14.500px] leading-[22px]"><span data-w="63">Country *</span></label>
        <div class="h-[37px] bg-white border-b-2 border-[#9a9c9f] flex items-center px-[9.500px] text-[16px]"><span data-w="136">-- Please Select --</span><svg class="ml-auto mr-[6px] w-[10px] h-[6px]" viewBox="0 0 10 6"><path d="M0 0H10L5 6Z"/></svg></div>
        <div class="mt-[16px] h-[37px] rounded-[3px] bg-[#2b64c8] text-white text-[16.500px] leading-[37px]"><span data-w="53">Submit</span></div>
        <a class="text-[15px] leading-[24px] text-[#2b64c8] underline underline-offset-2"><span data-w="123">Privacy Statement</span></a>
      </aside>
      <!-- Article -->
      <article class="ml-[114px] mt-[19px] w-[674px] text-[18.500px] leading-[28px] [&_p]:whitespace-nowrap">
        <p class="font-bold"><span data-w="642">[ You might also like: <span class="text-[#2b64c8]">A little SSH file copy magic at the command line</span>. ]</span></p>
        <p class="mt-[17px]"><span data-w="643">Exit codes are useful to an extent, but they can also be vague. For example, an</span><br><span data-w="668">exit code of 1 is a generic bucket for miscellaneous errors and isn't helpful at all. In</span><br><span data-w="664">this article, I explain the handful of <em>reserved error codes</em>, how they can occur, and</span><br><span data-w="660">how to use them to figure out what your problem is. A reserved error code is one</span><br><span data-w="649">that's used by Bash and you shouldn't create your own error codes that conflict</span><br><span data-w="86">with them.</span></p>
        <p class="mt-[17px]"><span data-w="586">Enough backstory. It's time to look at examples of what generates error</span><br><span data-w="130">codes/statuses.</span></p>
        <h2 class="mt-[14px] text-[32px] leading-[42px] font-medium"><span data-w="468">Extracting the elusive exit code</span></h2>
        <p class="mt-[8px]"><span data-w="655" class="bg-[#e6d3fa] leading-[25px]">To display the exit code for the last command you ran on the command line, use</span><br><span data-w="197" class="bg-[#e6d3fa]">the following command:</span></p>
        <div class="mt-[24px] h-[40px] bg-[#f7f7f7] pl-[8px] pt-[9px] font-['Liberation_Mono',monospace] text-[16px] leading-[20px]"><span data-w="87" class="bg-[#e6d3fa]">$ echo $?</span></div>
        <p class="mt-[26px]"><span data-w="659">The displayed response contains no pomp or circumstance. It's simply a number.</span><br><span data-w="638">You might also receive a shell error message from Bash further describing the</span><br><span data-w="671">error, but the exit code and the shell error together should help you discover what</span><br><span data-w="100">went wrong.</span></p>
        <h2 class="mt-[14px] text-[32px] leading-[42px] font-medium"><span data-w="186">Exit status 0</span></h2>
        <p class="mt-[8px]"><span data-w="642">An exit status of 0 is the best possible scenario, generally speaking. It tells you</span><br><span data-w="627">that your latest command or script executed successfully. Success is relative,</span><br><span data-w="673">because the exit code only informs you that the script or command executed fine,</span><br><span data-w="601">but the exit code doesn't tell you whether the information from it has any</span></p>
      </article>
    </div>
    <!-- Share links -->
    <div class="absolute right-[12px] top-[252px] flex flex-col gap-[18.800px] *:size-[33px]">
      <svg viewBox="0 0 33 33"><circle cx="16.500" cy="16.500" r="16.500" fill="#6ba8e5"/><path transform="translate(6 6) scale(.88)" fill="#fff" d="M23.950 4.570a10 10 0 0 1-2.820.77 4.960 4.960 0 0 0 2.160-2.720c-.95.550-2 .96-3.130 1.180a4.920 4.920 0 0 0-8.380 4.480C7.690 8.090 4.070 6.130 1.640 3.160a4.820 4.820 0 0 0-.67 2.480c0 1.710.87 3.210 2.190 4.100a4.900 4.900 0 0 1-2.230-.62v.06a4.920 4.920 0 0 0 3.950 4.830 5 5 0 0 1-2.210.08 4.940 4.940 0 0 0 4.600 3.420A9.870 9.870 0 0 1 0 19.540a13.990 13.990 0 0 0 7.550 2.210c9.050 0 14-7.500 14-13.980 0-.21 0-.42-.02-.63a9.940 9.940 0 0 0 2.420-2.570Z"/></svg>
      <svg viewBox="0 0 33 33"><circle cx="16.500" cy="16.500" r="16.500" fill="#3b78e8"/><path d="M14 28V18H10.500V14H14V11Q14 5.500 19 5.500H22.500V9.500H20Q18.200 9.500 18.200 11.300V14H22.300L21.700 18H18.200V28Z" fill="#fff"/></svg>
      <svg viewBox="0 0 33 33"><circle cx="16.500" cy="16.500" r="16.500" fill="#3577b0"/><path d="M7 13H11V26H7ZM13.500 13H17.300V14.800Q18.500 12.700 21.300 12.700Q26 12.700 26 18V26H22V18.800Q22 16 19.800 16T17.500 18.800V26H13.500Z" fill="#fff"/><circle cx="9" cy="9" r="2.400" fill="#fff"/></svg>
      <svg viewBox="0 0 33 33"><circle cx="16.500" cy="16.500" r="16.500" fill="#e5552c"/><ellipse cx="16.500" cy="19" rx="9.500" ry="7" fill="#fff"/><circle cx="7.500" cy="15.500" r="2.500" fill="#fff"/><circle cx="25.500" cy="15.500" r="2.500" fill="#fff"/><circle cx="22.500" cy="8" r="2" fill="#fff"/><path d="M16.500 12L18 6.500L22 7.500" fill="none" stroke="#fff" stroke-width="1.300"/><circle cx="12.800" cy="17.500" r="1.800" fill="#e5552c"/><circle cx="20.200" cy="17.500" r="1.800" fill="#e5552c"/><path d="M12.500 22Q16.500 24.500 20.500 22" fill="none" stroke="#e5552c" stroke-width="1.300"/></svg>
      <svg viewBox="0 0 33 33"><circle cx="16.500" cy="16.500" r="16.500" fill="#2b62ee"/><rect x="6.500" y="9.500" width="20" height="14" rx="1" fill="#fff"/><path d="M7 11L16.500 18L26 11" fill="none" stroke="#2b62ee" stroke-width="1.600"/></svg>
    </div>
    <!-- Cookie notice -->
    <div class="absolute inset-x-0 bottom-0 h-[82px] bg-[#151515]/92 text-white font-bold text-[14px] leading-[21.600px] pl-[212px] pt-[20px] whitespace-nowrap">
      <span data-w="1073">We use cookies on our websites to deliver our online services. Details about how we use cookies and how you may disable them are set out in our <u>Privacy</u></span><br><span data-w="460"><u>Statement</u>. By using this website you agree to our use of cookies.</span>
      <svg class="absolute right-[18px] top-[18px] size-[16px]" viewBox="0 0 16 16" stroke="#fff" stroke-width="2.400"><path d="M1 1L15 15M15 1L1 15"/></svg>
    </div>
  </div>
</section>

<!-- Dock -->
<footer class="absolute left-[97px] top-[1766px] w-[2747px] h-[136px] rounded-[42px] border-2 border-white/20 pl-[2px] pt-[18px] flex">
  <div class="absolute inset-0 rounded-[40px] bg-[linear-gradient(90deg,#1e1335_0%,#201438_30%,#241248_50%,#2b1152_60%,#521573_68%,#481470_77%,#301156_86%,#221245_92%,#1f1243_100%)]"></div>
  <div id="dock" class="relative flex"></div>
</footer>

<script>
/* Month grid. Event rows: [kind, title, time]; kinds r/y = dot colour, p* = filled bar, g = birthday, m = overflow count */
const widths = {'SALLIE MAE PAY...':107,'update spreadsh...':108,'Caroline Rickse...':100,'Abby Bergkamp’...':105,'Infra TPM OH':78.5,'Meet w Ted':66,'National Batman...':105,'Labor Day':59,'Rosh Hashanah':90,'Yom Kippur':67.6,'Jaime Velez’s Bi...':102,'Erg':19,'Lift':18.5,'Row':24,'3 more...':50,'1 more...':48,'4 PM':25.500,'5 PM':25.500,'10 AM':31,'3:30 PM':42,'1:30 PM':41,'7:30 AM':42};
const erg4=['r','Erg','4 PM'], lift4=['r','Lift','4 PM'], erg5=['r','Erg','5 PM'], row7=['r','Row','7:30 AM'], row3=['r','Row','3:30 PM'],
 infra=['y','Infra TPM OH','10 AM'], meet=['y','Meet w Ted','1:30 PM'], upd=['py','update spreadsh...'], sal=['py','SALLIE MAE PAY...'];
const days = [
 ['27'],['28',erg4],['29',lift4,erg5],['30',sal,erg4],['31',['g','Caroline Rickse...'],['g','Caroline Rickse...'],['m','3 more...']],['Sep 1',infra,row3],['2',row7],
 ['3'],['4',['pb','Labor Day'],erg4],['5',upd,lift4,['m','1 more...']],['6',erg4],['7',meet,lift4],['8',['g','Abby Bergkamp’...'],['g','Abby Bergkamp’...'],['m','1 more...']],['9',row7],
 ['10'],['11',erg4],['12',lift4,erg5],['13',erg4],['14',lift4],['15',infra,row3],['16',['pb','Rosh Hashanah'],row7],
 ['17'],['18',erg4],['19',upd,lift4,['m','1 more...']],['20',erg4],['21',['pu','National Batman...'],meet,['m','1 more...']],['22',row3],['23',row7],
 ['24'],['25',['pb','Yom Kippur'],erg4],['26',lift4,erg5],['27',erg4],['28',lift4],['29',infra,row3],['30',sal,row7],
 ['Oct 1'],['2',erg4],['3',upd,['g','Jaime Velez’s Bi...'],['m','3 more...']],['4',erg4],['5',meet,lift4],['6',row3],['7',row7]];
const gift = '<svg class="w-[13px] h-[14px] mr-[1.500px] shrink-0" viewBox="0 0 13 14" fill="none" stroke="#dd5348" stroke-width="1.100"><path d="M1 4H12V6.500H1ZM1.800 6.500H11.200V13H1.800ZM6.500 4V13M6.500 4Q2.500 3.500 3.500 1.500T6.500 4Q8.500 0 9.500 1.500T6.500 4"/></svg>';
const lab = t => '<span data-w="' + (widths[t]||'') + '">' + t + '</span>';
const bars = {py:'bg-[#655f2b]', pb:'bg-[#49402f]', pu:'bg-[#3b4162]'};
document.getElementById('month').innerHTML = days.map((d,i) => {
  const col = i%7, wk = col===0||col===6, out = i<5||i>34;
  const tone = out ? 'text-[#5d5a62]' : (wk ? 'text-[#89868d]' : 'text-[#e4e2e6]');
  const ev = d.slice(1).map(([k,t,tm]) => {
    if (bars[k]) return '<div class="h-[17px] mb-px ml-[6px] mr-[6px] pl-[9.500px] rounded-[3px] leading-[17px] text-[#eceae4] '+bars[k]+'">'+lab(t)+'</div>';
    if (k==='m') return '<div class="pl-[15px] h-[14px] leading-[12px] text-[#8b888f]">'+lab(t)+'</div>';
    if (k==='g') return '<div class="h-[17px] mb-px pl-[6px] flex items-center">'+gift+lab(t)+'</div>';
    return '<div class="h-[17px] mb-px pl-[6px] pr-[6px] flex items-center"><i class="size-[5px] rounded-full mr-[5px] '+(k==='r'?'bg-[#e4405f]':'bg-[#f5dc45]')+'"></i>'+lab(t)+'<span class="ml-auto text-[12px] text-[#7d7a82]">'+lab(tm)+'</span></div>';
  }).join('');
  return '<div class="border-t border-[#48454d] overflow-hidden text-[13px] text-[#e4e2e6] '+(col?'border-l ':'')+(wk?'bg-[#29272d]':'')+'"><div class="h-[33px] pr-[11px] text-right text-[17px] leading-[33px] tracking-tight '+tone+'">'+d[0]+'</div>'+ev+'</div>';
}).join('');

/* Browser tabs */
const fav = 'drive docs docs figma canvas stan docs canvas docs docs slides drive goog figma twob docs drive slides slides pan globe stan stan stan gh xx li gh py goog'.split(' ');
document.getElementById('tabs').innerHTML = fav.map((f,i) =>
  '<div class="'+(i<16?'w-[42.360px]':'w-[41.400px]')+' h-[21px] flex items-center pl-[8px] '+(i?'border-l border-[#4b4c50]':'')+'"><svg class="size-[16.500px] shrink-0"><use href="#'+f+'"/></svg>'+([1,2,3,5,6,8,9,10,13,19,21,23,29,0,4,7].includes(i)?'<i class="ml-[9px] w-px bg-[#a9acb0] '+([0,4,7,12,13].includes(i)?'h-[13px]':'h-[5px]')+'"></i>':'')+'</div>').join('');

/* Ruler ticks, labels and tab stops */
let r = '<path d="M0 15.500H606" stroke="#5b5761"/><path d="M0 32.500H606" stroke="#47434d"/>';
for (let n=0;n<=64;n++){ const x=5+n*9.310; if(x<606) r+='<path d="M'+x+' 15.500V'+(n%8===0?29:(n%4===0?21:19))+'" stroke="#6a6670"/>'; }
for (let n=0;n<=8;n++) r+='<text x="'+(8.500+n*74.500)+'" y="29.500" font-size="11" fill="#c9c7cc" font-family="Inter">'+n+'</text>';
for (let n=1;n<=12;n++){ const x=5+n*37.250; r+='<path d="M'+x+' 6L'+(x+6.500)+' 10.500L'+x+' 15Z" fill="#a7a4ab"/>'; }
r+='<path d="M0 5H10M0 8H10L5 15Z" fill="#a7a4ab" stroke="#a7a4ab"/><path d="M596 9H606L601 16Z" fill="#a7a4ab"/>';
document.getElementById('ruler').innerHTML = r;

/* Dock */
const sq = f => '<rect width="86" height="86" rx="20" fill="'+f+'"/>';
const lg = (id,a,b) => '<linearGradient id="'+id+'" x1="0" y1="0" x2="0" y2="1"><stop stop-color="'+a+'"/><stop offset="1" stop-color="'+b+'"/></linearGradient>';
const petals = ['#f29a38','#f2e03c','#b5d34a','#6cc07e','#62a8dd','#8a82c4','#c07ab4','#ec5a4a'].map((c,i)=>'<ellipse cx="43" cy="24" rx="11.500" ry="18" fill="'+c+'" fill-opacity=".88" class="mix-blend-multiply" transform="rotate('+i*45+' 43 43)"/>').join('');
const lp = ['#7fe05c','#f3bf3d','#e98b35','#c8362c','#9aa0a8','#e9455c','#9b3fd0','#3f8ff0','#55c79a'].map((c,i)=>'<rect x="'+(14+(i%3)*20.500)+'" y="'+(14+Math.floor(i/3)*21)+'" width="16" height="16" rx="4" fill="'+c+'"/>').join('');
const icons = [
 ['.', '', lg('f1','#5fc8f8','#3a72f0')+lg('f2','#f0f1f5','#d6dde8')+sq('url(#f1)')+'<path d="M46 0H66Q86 0 86 20V66Q86 86 66 86H54Q50 68 49 51H37Q36 25 46 0Z" fill="url(#f2)"/><path d="M23 25V32M63 25V32" stroke="#24303f" stroke-width="4" stroke-linecap="round"/><path d="M18 58Q42 78 69 58" fill="none" stroke="#16202e" stroke-width="3" stroke-linecap="round"/>'],
 ['', '', sq('#b4b1bf')+lp],
 ['', '', lg('s1','#4aa6f0','#3a6fe0')+lg('s0','#fff','#dcdcdc')+sq('url(#s0)')+'<circle cx="43" cy="43" r="37" fill="url(#s1)"/><circle cx="43" cy="43" r="32.500" fill="none" stroke="#d8e8fb" stroke-width="5" stroke-dasharray=".9 1.936"/><path d="M68 21L48 48L38 38Z" fill="#e0483c"/><path d="M18 65L38 38L48 48Z" fill="#f3f3f3"/>'],
 ['.', '4', lg('m1','#86f083','#55c84c')+lg('m2','#fff','#ccefcb')+sq('url(#m1)')+'<ellipse cx="42.500" cy="41" rx="31" ry="26" fill="url(#m2)"/><path d="M24 60Q26 68 22 71Q33 70 36 62Z" fill="#d4f1d3"/>'],
 ['', '', sq('#fbfbfb')+'<g class="isolate">'+petals+'</g>'],
 ['.', '', sq('#f4f3f6')+'<path d="M43 43L11.200 24.500A37 37 0 0 1 75 24.500Z" fill="#d94a3d"/><path d="M43 43L43 80A37 37 0 0 1 11 24.500Z" fill="#47a053"/><path d="M43 43L75 24.500A37 37 0 0 1 40 80Z" fill="#f2be42"/><path d="M43 24.500H75L60 43Z" fill="#f2be42"/><path d="M11 24.500L27 52L43 43Z" fill="#47a053"/><path d="M43 80L59 52L43 43L27 52Z" fill="#47a053"/><path d="M40 80L59 52L60 40Z" fill="#f2be42"/><path d="M11.200 24.500A37 37 0 0 1 75 24.500H43L26 50Z" fill="#d94a3d"/><circle cx="43" cy="43" r="18.500" fill="#fff"/><circle cx="43" cy="43" r="14.500" fill="#3f7de8"/>'],
 ['', '5', sq('url(#m1)')+'<rect x="13" y="24" width="41" height="38" rx="9" fill="url(#m2)"/><path d="M57 39L69 28Q72 27 72 30V57Q72 60 69 58L57 48Z" fill="url(#m2)"/>'],
 ['.', '19', sq('#f8f7f5')+'<path d="M0 27V20Q0 0 20 0H66Q86 0 86 20V27Z" fill="#e4584e"/><text x="42" y="21" font-size="19" font-weight="600" text-anchor="middle" fill="#fbe6e3">DEC</text><text x="42" y="73" font-size="51" font-weight="300" text-anchor="middle" fill="#222">4</text>'],
 ['', '', lg('c1','#b18c54','#8f6c3a')+'<path d="M78 12H86Q90 14 90 20V36H78Z" fill="#b7b7ba"/><path d="M78 31H90V46H78Z" fill="#5aa7e0"/><path d="M78 46H90V60H78Z" fill="#e88f3a"/><path d="M78 60H90V70Q88 76 82 76Z" fill="#5fcb5c"/>'+sq('url(#c1)')+'<path d="M6 4V82" stroke="#8a683a" stroke-width="1.500"/><circle cx="44" cy="42" r="26" fill="none" stroke="#7d5f35" stroke-width="2"/><circle cx="44" cy="36" r="9" fill="#8a6b3f"/><path d="M26 60Q30 50 44 50T62 60Q54 68 44 68T26 60Z" fill="#8a6b3f"/>'],
 ['.', '1', sq('#fbfbfb')+'<path d="M33 22H76M33 43H76M33 64H76" stroke="#bdbdbd" stroke-width="1.500"/>'+[['#3a7de8',22],['#dc4437',43],['#eb9a3a',64]].map(a=>'<circle cx="17" cy="'+a[1]+'" r="6.500" fill="none" stroke="'+a[0]+'" stroke-width="1.500"/><circle cx="17" cy="'+a[1]+'" r="4.500" fill="'+a[0]+'"/>').join('')],
 ['.', '', lg('n1','#fadf6e','#f4c63c')+sq('#f5f4f0')+'<path d="M0 22V20Q0 0 20 0H66Q86 0 86 20V22Z" fill="url(#n1)"/><path d="M2 26H84" stroke="#b8b6b0" stroke-width="2" stroke-dasharray="1 2"/><path d="M0 43H86M0 65H86" stroke="#cfcdc8" stroke-width="1.300"/>'],
 ['', '', lg('z1','#2f6ff0','#1f55e6')+sq('url(#z1)')+'<text x="43" y="50" font-size="24" font-weight="700" text-anchor="middle" fill="#fff" textLength="60" lengthAdjust="spacingAndGlyphs">zoom</text>'],
 ['', '', lg('a1','#55b4ef','#3562dc')+sq('url(#a1)')+'<g stroke="#f3f7fd" stroke-width="8" stroke-linecap="round"><path d="M46 19L29 50M38 19L64 65M17 53H50M64 53H69M23 62L21 66"/></g>'],
 ['', '1', lg('g1','#c9d2da','#8c8b88')+sq('url(#g1)')+'<circle cx="43" cy="43" r="36" fill="#2b2b2c"/><circle cx="43" cy="43" r="33" fill="none" stroke="#a2a2a2" stroke-width="4" stroke-dasharray="2 1.770"/><circle cx="43" cy="43" r="27" fill="#3a3a3b" stroke="#b0b0b0" stroke-width="4"/><circle cx="43" cy="43" r="15" fill="#555"/><path d="M43 43H70M43 43L29 20M43 43L29 66" stroke="#b4b4b4" stroke-width="4.500"/><circle cx="43" cy="43" r="4" fill="#777"/>'],
 ['.', '188', sq('#fbfbfb')+'<g stroke-width="12" stroke-linecap="round"><path d="M35 19V19.100M19 35H35" stroke="#5fc0e8"/><path d="M51 19V35M67 35V35.100" stroke="#4aaf7d"/><path d="M51 51H67M51 67V67.100" stroke="#e4b347"/><path d="M35 51V67M19 51V51.100" stroke="#cf3058"/></g>'],
 ['.', '', sq('#fdfdfd')+'<path d="M12 32L18 27L58 62V73Z" fill="#3d86d6"/><path d="M12 54L18 59L58 26V13Z" fill="#2a66ad"/><path d="M12 32L18 27L60 60V73L56 72Z" fill="#3478c6"/><path d="M58 13L73 20V66L58 73Z" fill="#4a9aea"/>'],
 null,
 ['.', '', sq('#fbfbfa')+'<path d="M15 0V86" stroke="#f0b4ac"/><path d="M0 22H86M0 33H86M0 43H86M0 54H86M0 64H86M0 74H86" stroke="#b4b4b6" stroke-width="1.200"/><path d="M76 -9L82 -7L46 76L35 91L36 73Z" fill="#9aa3ab"/><path d="M78 -8L42 74" stroke="#e8ecef" stroke-width="2.500"/><path d="M73 4L58 32" stroke="#7a9ab8" stroke-width="2.500"/><path d="M37 77L44 80L34 92Z" fill="#333"/>'],
 ['.', '', '<g transform="translate(-7 0)"><path d="M47 8Q50 2 56 5L86 32Q103 48 96 66Q88 83 65 83Q41 82 34 64Q32 59 33 56L14 68Q5 71 2 65Q0 61 4 56L36 30H20Q15 28 15 25Q16 21 20 21H54L46 13Z" fill="#dd8434"/><ellipse cx="64" cy="49" rx="22" ry="19" fill="#fff"/><ellipse cx="65" cy="48" rx="14" ry="12" fill="#345a8c"/></g>'],
 ['.', '', sq('#f6f6f7')+'<path d="M20 23H64M20 36H62M20 49H54" stroke="#62b6e0" stroke-width="4" stroke-linecap="round"/><path d="M20 65Q28 58 33 61T46 66L52 65" fill="none" stroke="#62b6e0" stroke-width="3" stroke-linecap="round"/><path d="M77 5Q86 10 86 24L58 60L52 68L52 58Z" fill="#2e2e30"/><path d="M75 14L86 25" stroke="#d4d4d6" stroke-width="3"/>'],
 ['.', '', lg('t1','#d3e2f2','#8e8a8c')+sq('url(#t1)')+'<rect x="3" y="3" width="80" height="80" rx="17" fill="#050505"/><rect x="9" y="9" width="68" height="68" rx="11" fill="#252525"/><path d="M15 16L24 21L15 26M29 32H41" fill="none" stroke="#fff" stroke-width="3"/>'],
 ['.', '', lg('x1','#65c8ee','#3a8fd0')+lg('x0','#1e4a66','#0b2230')+'<circle cx="43" cy="43" r="49" fill="url(#x0)" stroke="#33598f" stroke-width="1.500"/><path d="M-7 74H20L43 56L58 74H84L60 44L92 12H66L46 30L34 12H4L26 43Z" fill="#3a78b8"/><path d="M-4 71H22L44 52L60 71H84L60 42L94 12H68L48 29L36 12H6L29 42Z" fill="url(#x1)"/>'],
 null,
 ['', '', '<path d="M8 5Q8 -1 13 -1H30L38 5H74Q77 5 77 9V20H8Z" fill="#58aee4"/><rect x="4" y="7" width="80" height="60" fill="#fff"/><ellipse cx="43" cy="18" rx="12" ry="5" fill="#c0a4ee"/><path d="M36 22L26 31M40 23L36 31M46 23L50 31M50 22L62 31" stroke="#c9b6ee"/><rect x="0" y="31" width="87" height="33" fill="#fff" stroke="#dcdce4"/><path d="M5 59H83" stroke="#a05ae0" stroke-width="1.800" stroke-dasharray="9 1.500"/>'],
 ['', '', lg('b1','#a5a5a8','#68686b')+'<g transform="translate(2 0)"><path d="M5 10L79 10L71 82Q69 90 55 90H29Q16 90 14 82Z" fill="url(#b1)"/><path d="M28 16Q24 40 30 84M56 20Q60 50 54 86" stroke="#8c8c90" stroke-width="8" fill="none" opacity=".5"/><ellipse cx="42" cy="7" rx="37" ry="8" fill="#4c4c50"/><path d="M9 6L16 -5L24 -2L32 -9L40 -2L50 -9L58 -3L68 -4L74 7L62 14L44 12L28 15L14 11Z" fill="#d2d0ce"/><path d="M22 4L30 -2L28 10ZM54 0L60 8L50 8ZM64 -2L70 4L62 6ZM12 4L18 0L17 10ZM40 0L46 4L42 11Z" fill="#4d5a66"/><circle cx="33" cy="4" r="3" fill="#4aa8d8"/><circle cx="57" cy="3" r="2.500" fill="#d96a3a"/></g>']
];
document.getElementById('dock').innerHTML = icons.map(ic => {
  if (!ic) return '<div class="w-[50px] flex justify-center"><i class="w-[1.500px] h-[100px] -mt-[2px] bg-[#8b6aa8]/70"></i></div>';
  const badge = ic[1] ? '<span class="absolute right-[3px] -top-[10px] min-w-[39px] h-[39px] px-[5px] rounded-full bg-[#e54d3e] shadow text-[25px] leading-[39px] text-center tracking-tighter">'+ic[1]+'</span>' : '';
  const dot = ic[0] ? '<i class="mt-[19px] size-[7px] rounded-full bg-[#b8a3dc]"></i>' : '';
  return '<div class="relative w-[114.520px] flex flex-col items-center"><svg class="size-[86px] overflow-visible font-[\'Inter\',sans-serif]" viewBox="0 0 86 86">'+ic[2]+'</svg>'+dot+badge+'</div>';
}).join('');

/* Track each measured label out to its set width, once styles and fonts are in place */
function fitLabels() {
  document.querySelectorAll('[data-w]').forEach(e => {
    const t = parseFloat(e.dataset.w); if (!t) return;
    e.style.whiteSpace = 'nowrap';
    e.style.letterSpacing = '0px';
    const w = e.getBoundingClientRect().width, n = e.textContent.length;
    e.style.letterSpacing = ((t - w) / n).toFixed(3) + 'px';
  });
}
fitLabels();
document.fonts.ready.then(fitLabels);
window.addEventListener('load', () => { fitLabels(); requestAnimationFrame(fitLabels); });
new ResizeObserver(fitLabels).observe(document.getElementById('month'));
[0, 50, 150, 400].forEach(ms => setTimeout(fitLabels, ms));
</script>
</body>
</html>
